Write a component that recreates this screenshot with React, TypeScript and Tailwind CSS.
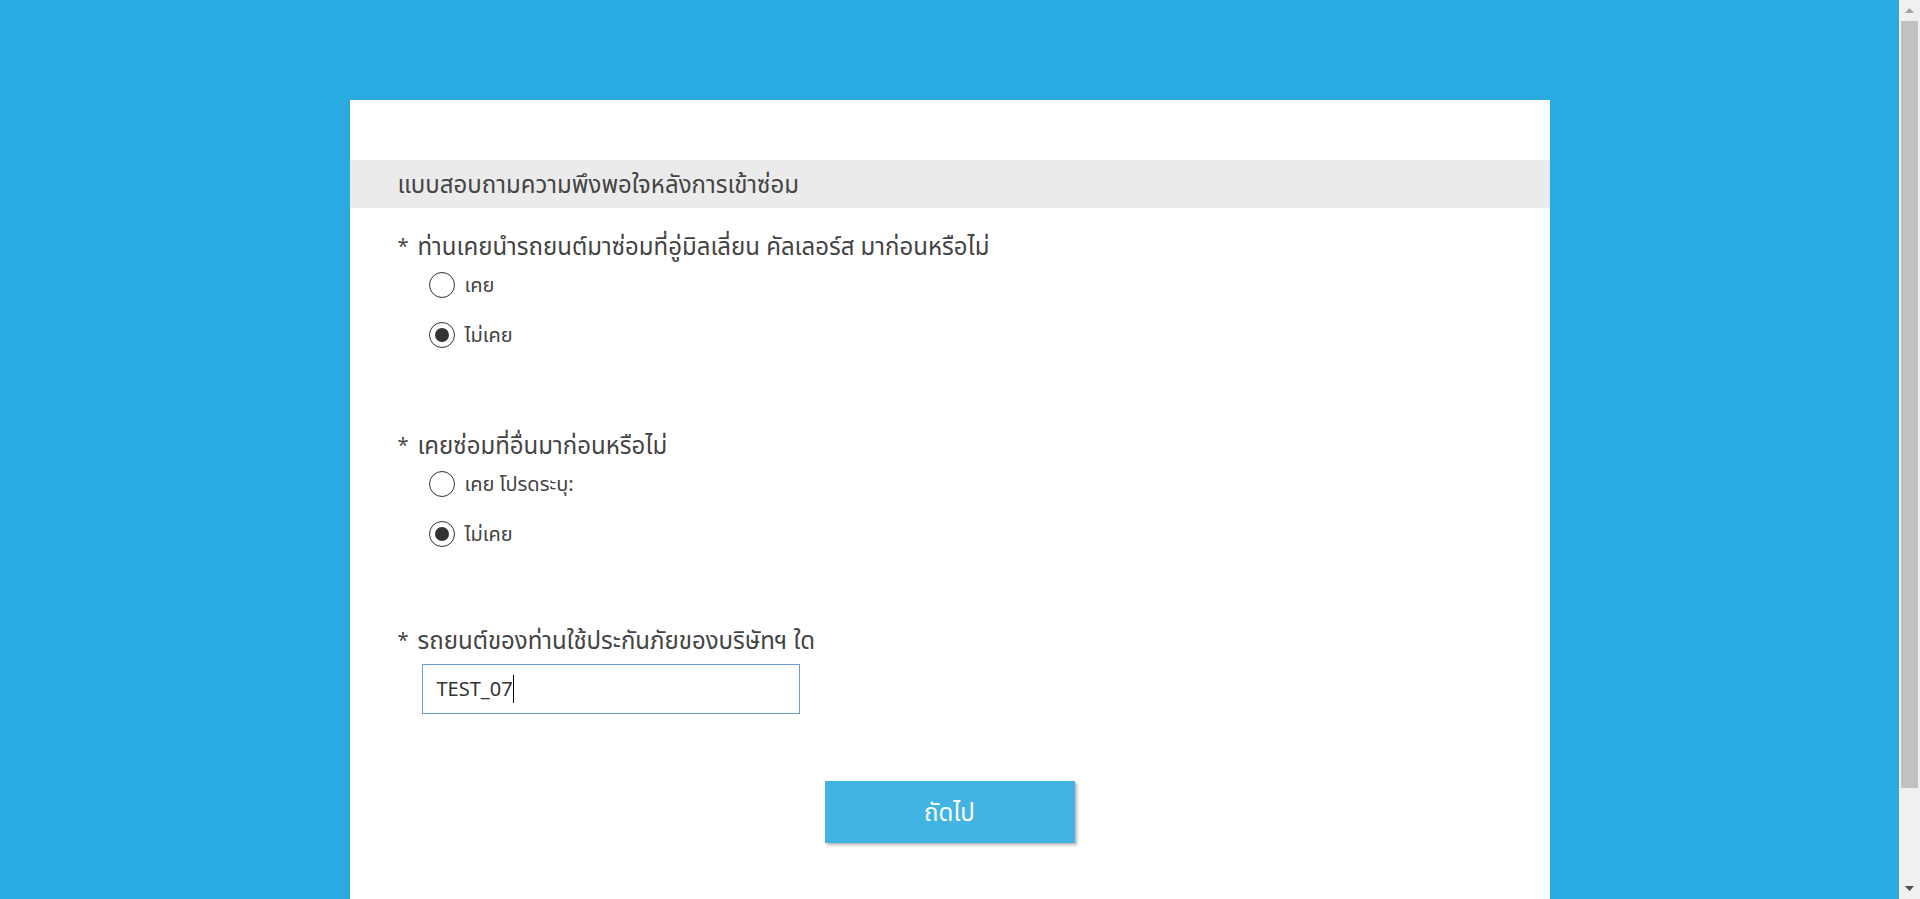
import { useState } from "react";

type Option = { label: string };

type RadioQuestionProps = {
  title: string;
  options: Option[];
  selected: number;
  onSelect: (idx: number) => void;
  className?: string;
};

function RadioQuestion({ title, options, selected, onSelect, className }: RadioQuestionProps) {
  return (
    <div className={className}>
      <p className="flex h-[28px] items-center text-[24px] text-[#444444]">
        <span className="w-[20px] text-[20px]">*</span>
        <span>{title}</span>
      </p>
      {options.map((opt, idx) => (
        <label
          key={idx}
          className="ml-[31px] flex h-[50px] cursor-pointer items-center gap-[10px]"
          onClick={() => onSelect(idx)}
        >
          <span className="flex h-[26px] w-[26px] items-center justify-center rounded-full border border-[#333333] bg-white">
            {selected === idx && <span className="h-[14px] w-[14px] rounded-full bg-[#333333]" />}
          </span>
          <span className="text-[20px] text-[#444444]">{opt.label}</span>
        </label>
      ))}
    </div>
  );
}

// window scrollbar as seen in the screenshot
function Scrollbar() {
  return (
    <div className="flex h-full w-[21px] shrink-0 flex-col bg-[#f0f0f0]">
      <div className="flex h-[21px] items-center justify-center">
        <svg width="9" height="5" viewBox="0 0 9 5">
          <path d="M4.5 0 L9 5 L0 5 Z" fill="#a3a3a3" />
        </svg>
      </div>
      <div className="mx-[2px] h-[767px] bg-[#c1c1c1]" />
      <div className="flex-1" />
      <div className="flex h-[21px] items-center justify-center">
        <svg width="9" height="5" viewBox="0 0 9 5">
          <path d="M0 0 L9 0 L4.5 5 Z" fill="#505050" />
        </svg>
      </div>
    </div>
  );
}

export default function App() {
  const [q1, setQ1] = useState(1);
  const [q2, setQ2] = useState(1);

  return (
    <div
      className="flex h-screen overflow-hidden"
      style={{ fontFamily: '"Noto Sans", "Noto Sans Thai", "Loma", "Garuda", sans-serif' }}
    >
      <main className="flex-1 overflow-hidden bg-[#29abe2] pt-[100px]">
        <div className="mx-auto w-[1200px] bg-white pt-[60px] pb-[161px]">
          <div className="flex h-[48px] items-center bg-[#ebebeb] pl-[48px]">
            <h1 className="text-[24px] text-[#444444]">แบบสอบถามความพึงพอใจหลังการเข้าซ่อม</h1>
          </div>

          <div className="pl-[48px]">
            <RadioQuestion
              className="mt-[24px]"
              title="ท่านเคยนำรถยนต์มาซ่อมที่อู่มิลเลี่ยน คัลเลอร์ส มาก่อนหรือไม่"
              options={[{ label: "เคย" }, { label: "ไม่เคย" }]}
              selected={q1}
              onSelect={setQ1}
            />

            <RadioQuestion
              className="mt-[71px]"
              title="เคยซ่อมที่อื่นมาก่อนหรือไม่"
              options={[{ label: "เคย โปรดระบุ:" }, { label: "ไม่เคย" }]}
              selected={q2}
              onSelect={setQ2}
            />

            <div className="mt-[67px]">
              <p className="flex h-[28px] items-center text-[24px] text-[#444444]">
                <span className="w-[20px] text-[20px]">*</span>
                <span>รถยนต์ของท่านใช้ประกันภัยของบริษัทฯ ใด</span>
              </p>
              <div className="ml-[24px] mt-[10px] flex h-[50px] w-[378px] items-center border border-[#6b9bd6] px-[14px] text-[20px] text-[#333333]">
                <span>TEST_07</span>
                <span className="h-[28px] w-px bg-black" />
              </div>
            </div>
          </div>

          <div className="mt-[67px] flex justify-center">
            <button className="h-[62px] w-[250px] bg-[#42b4e4] text-[24px] text-white shadow-[2px_2px_3px_rgba(0,0,0,0.3)]">
              ถัดไป
            </button>
          </div>
        </div>
      </main>
      <Scrollbar />
    </div>
  );
}
